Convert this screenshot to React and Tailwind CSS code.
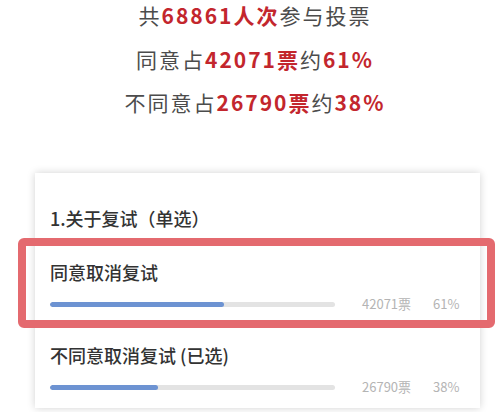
import React from 'react';

const font = { fontFamily: '"Noto Sans CJK SC", "Noto Sans", sans-serif' };

const Red = ({ children }) => <span className="text-[#c3262d] font-bold">{children}</span>;

const Option = ({ label, votes, pct, fill }) => (
  <div>
    <div className="text-[18px] leading-[26px] font-medium text-[#333]">{label}</div>
    <div className="flex items-center h-5 mt-[9px]">
      <div className="w-[285px] h-[5px] rounded-full bg-[#e3e3e3] overflow-hidden">
        <div className="h-full bg-[#6d93d2] rounded-full" style={{ width: fill }} />
      </div>
      <span className="ml-[27px] w-[51px] text-[13px] leading-5 text-[#b4b4b4]">{votes}</span>
      <span className="ml-[20px] text-[13px] leading-5 text-[#b4b4b4]">{pct}</span>
    </div>
  </div>
);

const App = () => {
  return (
    <div className="w-[500px] h-[412px] bg-white overflow-hidden" style={font}>
      {/* 统计 */}
      <div className="pl-[10px] text-center text-[21px] leading-[30px] tracking-[2px] text-[#4c4c4c]">
        <p>共<Red>68861人次</Red>参与投票</p>
        <p className="mt-[14px]">同意占<Red>42071票</Red>约<Red>61%</Red></p>
        <p className="mt-[13px]">不同意占<Red>26790票</Red>约<Red>38%</Red></p>
      </div>

      {/* 投票卡片 */}
      <div className="relative ml-[35px] mt-[56px] w-[445px] bg-white shadow-[0_0_8px_rgba(0,0,0,0.18)] pl-[15px] pt-[32px] pb-[11px]">
        <div className="text-[18px] leading-[26px] font-medium text-[#333]">1.关于复试（单选）</div>
        <div className="mt-[28px]">
          <Option label="同意取消复试" votes="42071票" pct="61%" fill="61%" />
        </div>
        <div className="mt-[28px]">
          <Option label="不同意取消复试 (已选)" votes="26790票" pct="38%" fill="38%" />
        </div>
        <div className="absolute left-[-17px] right-[-15px] top-[65px] h-[90px] border-[8px] border-[#e46a6f] rounded-[6px]" />
      </div>
    </div>
  );
};

export default App;
